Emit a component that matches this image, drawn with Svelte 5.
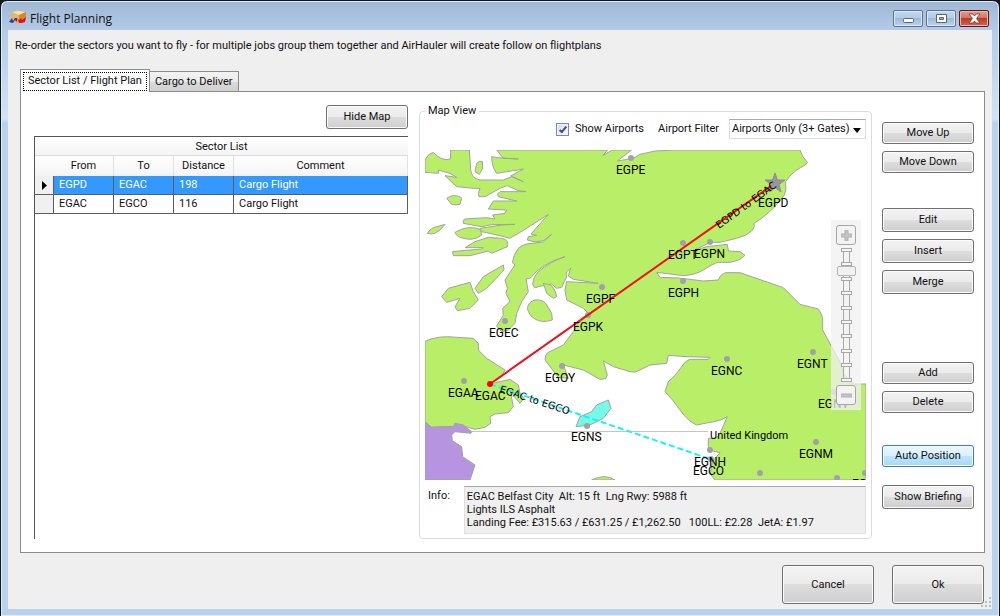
<script lang="ts">
  type Sector = { from: string; to: string; distance: number; comment: string }
  type Airport = { code: string; x: number; y: number; lx: number; ly: number }

  const sectors: Sector[] = [
    { from: 'EGPD', to: 'EGAC', distance: 198, comment: 'Cargo Flight' },
    { from: 'EGAC', to: 'EGCO', distance: 116, comment: 'Cargo Flight' }
  ]

  // x/y is the marker, lx/ly the start of the label
  const airports: Airport[] = [
    { code: 'EGPE', x: 206, y: 8, lx: 191, ly: 24 },
    { code: 'EGPT', x: 258, y: 93, lx: 243, ly: 109 },
    { code: 'EGPN', x: 285, y: 92, lx: 269, ly: 108 },
    { code: 'EGPH', x: 258, y: 131, lx: 243, ly: 147 },
    { code: 'EGPF', x: 177, y: 137, lx: 161, ly: 153 },
    { code: 'EGPK', x: 163, y: 165, lx: 148, ly: 181 },
    { code: 'EGEC', x: 80, y: 171, lx: 64, ly: 187 },
    { code: 'EGOY', x: 137, y: 216, lx: 120, ly: 232 },
    { code: 'EGAA', x: 39, y: 231, lx: 23, ly: 247 },
    { code: 'EGNS', x: 162, y: 276, lx: 146, ly: 291 },
    { code: 'EGNC', x: 302, y: 209, lx: 286, ly: 225 },
    { code: 'EGNT', x: 388, y: 202, lx: 372, ly: 218 },
    { code: 'EGNV', x: 409, y: 242, lx: 393, ly: 258 },
    { code: 'EGNM', x: 391, y: 292, lx: 374, ly: 308 },
    { code: 'EGNH', x: 285, y: 300, lx: 269, ly: 316 },
    { code: 'EGCO', x: 286, y: 309, lx: 268, ly: 325 },
    { code: '', x: 335, y: 323, lx: 0, ly: 0 },
    { code: '', x: 440, y: 323, lx: 0, ly: 0 },
    { code: 'EGCN', x: 412, y: 328, lx: 427, ly: 338 }
  ]

  // coastlines are digitised at three units per map pixel
  const land = [
    // mainland, clockwise from the north west
    'M215 0 H548 L533 17 L562 0 H620 L577 33 L625 25 L645 13 L690 3 L750 0 H1125 Q1130 20 1148 38 L1140 45 L1115 60 Q1098 70 1082 95 Q1085 120 1078 135 L1062 155 L1045 175 L1010 205 L987 220 Q990 232 983 240 Q965 258 935 265 L885 277 L855 277 L805 303 L845 290 L907 283 L910 303 L945 305 L960 316 Q945 332 915 337 L880 337 Q870 338 835 360 Q810 375 775 377 L695 367 L705 382 L760 384 L835 393 L880 390 Q888 370 903 368 L945 368 L1075 413 L1125 463 L1180 477 L1188 490 L1193 505 V540 L1220 590 L1245 635 L1255 670 L1285 702 H1323 V990 H870 L856 972 L862 935 L885 908 L850 900 V865 Q878 868 885 850 L907 800 Q890 812 865 815 L815 825 Q790 815 765 780 Q745 750 720 725 Q725 710 730 695 Q750 680 770 650 Q780 632 795 628 H850 L855 622 L785 620 L730 616 L725 640 L675 645 L645 660 Q630 670 615 665 L565 650 L535 633 L547 675 L542 686 L525 688 L475 660 L415 645 L430 685 L400 682 L360 630 Q360 615 368 608 L415 585 L445 545 L465 510 L490 490 L475 475 Q450 462 425 450 L420 420 L425 395 L520 400 L445 388 L430 378 L437 355 L425 365 L425 380 L410 412 L395 415 L380 402 L340 410 Q325 420 323 400 Q325 380 340 365 Q375 335 420 320 Q350 340 315 385 L303 387 L310 425 L290 455 L275 490 L270 520 L250 540 L230 545 L215 528 L235 495 L233 475 L255 455 L243 430 L247 415 L240 390 L270 345 L262 338 Q265 315 280 295 Q290 285 305 282 L355 276 L380 253 L355 272 L330 276 L307 270 L310 260 L335 256 L318 252 L370 193 L305 235 L255 265 L225 257 L170 245 L165 235 L230 225 L270 223 L200 224 L170 230 L115 220 Q112 208 120 207 L185 203 L210 207 L203 195 L240 190 L245 180 L190 177 L205 153 L275 153 L220 140 L218 132 L225 125 L303 125 L280 122 L247 107 L225 115 L180 140 L162 140 L160 130 L165 115 L145 115 L95 110 L60 77 L95 82 L75 70 L40 60 L40 70 L0 67 V30 Q10 10 25 7 Q50 35 77 27 V0 H133 L137 60 Q140 85 165 90 L210 90 L235 90 L260 80 L295 95 L257 78 L295 57 L265 62 L215 70 Q200 50 200 20 L220 23 L280 27 L235 25 Z',
    'M150 65 L155 40 Q165 30 172 35 L173 55 L163 73 Z',
    'M65 145 Q75 137 85 137 Q105 137 110 145 L105 163 Q90 167 80 163 Z',
    'M7 250 Q12 240 25 233 L60 223 L45 240 Q30 252 20 252 Z',
    'M90 247 Q110 235 130 233 Q155 232 167 240 L170 255 Q155 268 135 268 Q95 265 90 247 Z',
    'M190 262 L230 265 Q243 267 247 275 V290 L200 310 L190 303 L135 317 L85 317 L83 305 L100 303 L170 297 L175 293 L120 293 L150 275 Z',
    'M150 415 L175 380 L235 345 L237 360 L185 415 L160 430 Z',
    'M50 440 L70 415 L135 397 L145 425 L160 450 L135 475 L97 482 L90 470 L105 445 L65 457 Z',
    'M355 400 L378 405 Q395 425 395 440 L385 445 L365 430 Z',
    'M307 475 Q310 455 330 450 Q350 448 362 460 L380 490 L382 510 Q350 520 330 507 Q312 497 307 475 Z',
    'M500 990 Q540 970 570 990 Z',
    // Northern Ireland
    'M0 574 Q40 555 95 562 L145 565 L160 580 V600 L185 625 L240 660 L230 680 L195 702 L255 688 L280 705 L285 730 L297 745 L285 760 L270 742 L265 725 L257 730 L265 770 L250 788 L210 792 L195 800 L197 820 L180 832 L150 838 L105 825 L85 830 L45 830 L15 832 L0 815 Z'
  ]
  const ireland =
    'M0 815 L20 832 L85 830 L90 820 L115 825 L140 845 L138 850 L90 845 L80 855 L82 872 L110 890 L113 920 L150 945 L135 990 H0 Z'
  const isleOfMan = 'M453 830 L465 800 L500 785 L515 765 L550 750 L558 775 L535 805 L495 825 Z'

  const ticks = Array.from({ length: 10 }, (_, i) => Math.round(2 + i * 14.4))

  let selected = $state(0)
  let showAirports = $state(true)
  let zoom = $state(7.7)
</script>

<div class="window">
  <header class="titlebar">
    <svg class="app-icon" width="18" height="16" viewBox="0 0 18 16" aria-hidden="true">
      <path d="M3 2 L9 1 L17 2 L17 10 L9 14 L2 11 Z" fill="#e9b65c" />
      <path d="M3 2 L9 1 L17 2 L10 5 Z" fill="#fbe3a4" />
      <path d="M10 5 L17 2 V10 L10 13 Z" fill="#d08a36" />
      <path d="M0 12 L3 8 L4 11 L6 8 L8 8 L8 12 L6 10 L4 13 Z" fill="#2a35c4" />
      <path d="M8 8 L10 10 L12 8 L13 10 L17 7 L16 12 L13 13 L10 13 Z" fill="#e0141c" />
    </svg>
    <h1>Flight Planning</h1>
    <div class="caption-buttons">
      <button class="cap" aria-label="Minimize">
        <svg width="28" height="15" viewBox="0 0 28 15"><rect x="9.500" y="7.500" width="10" height="4" rx="1" fill="#fff" stroke="#5b6578" /></svg>
      </button>
      <button class="cap" aria-label="Maximize">
        <svg width="28" height="15" viewBox="0 0 28 15"><path d="M9.500 3.500 h10 v8 h-10 z M12.500 6.500 h4 v2 h-4 z" fill="#fff" fill-rule="evenodd" stroke="#5b6578" /></svg>
      </button>
      <button class="cap close" aria-label="Close">
        <svg width="28" height="15" viewBox="0 0 28 15"><path d="M9 3 h4 l1.500 2 l1.500 -2 h4 l-3.500 4.500 l3.500 4.500 h-4 l-1.500 -2 l-1.500 2 h-4 l3.500 -4.500 z" fill="#fff" stroke="#6b3a3a" stroke-width=".8" /></svg>
      </button>
    </div>
  </header>

  <main class="client">
    <p class="intro">
      Re-order the sectors you want to fly - for multiple jobs group them together and AirHauler will create follow on flightplans
    </p>

    <div class="tabs" role="tablist">
      <button class="tab active" role="tab" aria-selected="true"><span>Sector List / Flight Plan</span></button>
      <button class="tab" role="tab" aria-selected="false">Cargo to Deliver</button>
    </div>

    <section class="panel">
      <div class="sectors">
        <button class="btn tall hide-map">Hide Map</button>
        <div class="grid">
          <table>
            <caption>Sector List</caption>
            <thead>
              <tr>
                <th class="marker"></th>
                <th class="short">From</th>
                <th class="short">To</th>
                <th class="short">Distance</th>
                <th>Comment</th>
              </tr>
            </thead>
            <tbody>
              {#each sectors as sector, i}
                <tr class:selected={i === selected} onclick={() => (selected = i)}>
                  <td class="marker">
                    {#if i === selected}
                      <svg width="5" height="9" viewBox="0 0 5 9"><path d="M0 0 L5 4.500 L0 9 Z" /></svg>
                    {/if}
                  </td>
                  <td>{sector.from}</td>
                  <td>{sector.to}</td>
                  <td>{sector.distance}</td>
                  <td>{sector.comment}</td>
                </tr>
              {/each}
            </tbody>
          </table>
        </div>
      </div>

      <fieldset class="map-view">
        <legend>Map View</legend>
        <div class="filters">
          <label class="check"><input type="checkbox" bind:checked={showAirports} />Show Airports</label>
          <label for="filter">Airport Filter</label>
          <div class="select">
            <select id="filter">
              <option>Airports Only (3+ Gates)</option>
            </select>
            <svg width="8" height="5" viewBox="0 0 8 5"><path d="M0 0 H8 L4 5 Z" /></svg>
          </div>
        </div>

        <div class="map">
          <svg class="chart" viewBox="0 0 441 330" preserveAspectRatio="xMidYMid slice">
            <path d="M40 281.500 H283" stroke="#c4c4c4" />
            <g class="coast" transform="scale(.33333)">
              {#each land as d}
                <path {d} />
              {/each}
              <path d={ireland} fill="#b694df" />
              <path d={isleOfMan} fill="#74fae6" />
            </g>

            {#if showAirports}
              {#each airports as a}
                <circle cx={a.x} cy={a.y} r="3" fill="#a3a1a8" />
              {/each}
            {/if}
            <path d="M350 23 L352.500 30 L360 30 L354 34.500 L356 42 L350 37.500 L344 42 L346 34.500 L340 30 L347.500 30 Z" fill="#9b95a3" stroke="#8f8a96" />

            <path d="M65 234 L346 36" stroke="#f0101c" stroke-width="2" />
            <path d="M65 234 L288 310" stroke="#18f4f4" stroke-width="2" stroke-dasharray="6 3" />
            <circle cx="65" cy="234" r="3" fill="#f00" />
            <text class="route" transform="translate(294 79) rotate(-36)">EGPD to EGAC</text>
            <text class="route" transform="translate(74 242) rotate(18)">EGAC to EGCO</text>

            {#if showAirports}
              {#each airports as a}
                <text x={a.lx} y={a.ly}>{a.code}</text>
              {/each}
              <text x="333" y="57">EGPD</text>
              <text x="50" y="250">EGAC</text>
            {/if}
            <text x="285" y="289" class="country">United Kingdom</text>
          </svg>

          <div class="zoom">
            <button aria-label="Zoom in">
              <svg width="11" height="11" viewBox="0 0 11 11"><path d="M4 0 h3 v4 h4 v3 h-4 v4 h-3 v-4 h-4 v-3 h4 z" /></svg>
            </button>
            <div class="rail">
              <svg width="19" height="134" viewBox="0 0 19 134">
                <path d="M6.500 2 V132 M12.500 2 V132" />
                {#each ticks as y}
                  <rect x="4.500" y={y - 1.5} width="10" height="3" />
                {/each}
              </svg>
              <input type="range" min="0" max="9" step="0.1" aria-label="Zoom level" bind:value={zoom} />
            </div>
            <button aria-label="Zoom out">
              <svg width="11" height="11" viewBox="0 0 11 11"><path d="M0 4 h11 v3 h-11 z" /></svg>
            </button>
          </div>
        </div>

        <div class="info">
          <label for="info">Info:</label>
          <textarea id="info" rows="3" readonly
            value={'EGAC Belfast City  Alt: 15 ft  Lng Rwy: 5988 ft\nLights ILS Asphalt\nLanding Fee: £315.63 / £631.25 / £1,262.50   100LL: £2.28  JetA: £1.97'}
          ></textarea>
        </div>
      </fieldset>

      <div class="actions">
        <div class="group">
          <button class="btn">Move Up</button>
          <button class="btn">Move Down</button>
        </div>
        <div class="group">
          <button class="btn tall">Edit</button>
          <button class="btn tall">Insert</button>
          <button class="btn tall">Merge</button>
        </div>
        <div class="group add">
          <button class="btn">Add</button>
          <button class="btn">Delete</button>
        </div>
        <div class="group auto">
          <button class="btn hot">Auto Position</button>
          <button class="btn tall">Show Briefing</button>
        </div>
      </div>
    </section>

    <footer>
      <button class="btn big">Cancel</button>
      <button class="btn big">Ok</button>
      <svg class="grip" width="10" height="10" viewBox="0 0 10 10" aria-hidden="true">
        <path d="M8 0h2v2h-2z M4 4h2v2h-2z M8 4h2v2h-2z M0 8h2v2h-2z M4 8h2v2h-2z M8 8h2v2h-2z" fill="#bcbcbc" />
      </svg>
    </footer>
  </main>
</div>

<style>
  :global(body) {
    margin: 0;
    background: #14181e;
  }

  .window {
    box-sizing: border-box;
    min-height: 100vh;
    display: flex;
    flex-direction: column;
    padding: 0 7px 7px;
    border: 1px solid #10151c;
    border-radius: 7px 7px 0 0;
    background: linear-gradient(#a0b7d4, #b4cce9 30px, #d2e3f5 118px, #b9d1ea 122px);
    box-shadow: inset 0 0 0 1px #d8f0fa;
    font: 11px/14px Roboto, "Liberation Sans", sans-serif;
    color: #111;
  }

  button,
  select,
  textarea {
    font: inherit;
    color: inherit;
  }

  .titlebar {
    display: flex;
    align-items: center;
    height: 29px;
    padding: 0 3px 0 1px;
  }

  .app-icon {
    margin: 5px 3px 0 0;
  }

  h1 {
    flex: 1;
    margin: 7px 0 0;
    font: 12px/16px "Open Sans", sans-serif;
  }

  .caption-buttons {
    display: flex;
    gap: 3px;
    margin-top: 5px;
  }

  .cap {
    display: block;
    width: 30px;
    height: 17px;
    padding: 0;
    border: 1px solid #5c7390;
    border-radius: 2px;
    background: linear-gradient(#c3d6ec, #b4cbe6 50%, #9db8d6 50%, #bcd4ee);
    box-shadow: inset 0 0 0 1px #dbe8f6;
  }

  .cap svg {
    display: block;
  }

  .cap.close {
    border-color: #5a1a1c;
    background: linear-gradient(#e59f92, #d4705e 50%, #bd3a24 50%, #d6674c);
    box-shadow: inset 0 0 0 1px #eeb5a9;
  }

  .client {
    flex: 1;
    display: flex;
    flex-direction: column;
    padding: 9px 7px 5px 12px;
    background: #efefef;
  }

  .intro {
    margin: 0 0 16px -5px;
  }

  .tabs {
    display: flex;
    align-items: flex-end;
  }

  .tab {
    height: 20px;
    padding: 0 5px;
    border: 1px solid #8a8c90;
    border-bottom: 0;
    background: linear-gradient(#f3f3f3, #ebebeb 50%, #dcdcdc 50%, #cfcfcf);
  }

  .tab.active {
    height: 23px;
    margin-bottom: -1px;
    padding: 2px;
    background: #fff;
    z-index: 1;
  }

  .tab.active span {
    display: block;
    padding: 1px 4px 2px;
    border: 1px dotted #000;
  }

  .tab + .tab {
    border-left: 0;
  }

  .panel {
    flex: 1;
    display: grid;
    grid-template-columns: 375fr 453fr 92px;
    gap: 10px;
    padding: 12px 10px 13px 13px;
    border: 1px solid #8a8c90;
    background: #fff;
  }

  .btn {
    height: 22px;
    padding: 0 6px;
    border: 1px solid #707070;
    border-radius: 3px;
    background: linear-gradient(#f3f3f3, #ebebeb 50%, #dddddd 50%, #cfcfcf);
    box-shadow: inset 0 0 0 1px #fbfbfb;
  }

  .btn.tall {
    height: 24px;
  }

  .btn.big {
    width: 92px;
    height: 39px;
  }

  .btn.hot {
    border-color: #3c7fb1;
    background: linear-gradient(#eaf6fd, #d9f0fc 50%, #bee6fd 50%, #a7d9f5);
  }

  .sectors {
    display: flex;
    flex-direction: column;
    gap: 7px;
    padding: 1px 1px 0 0;
  }

  .hide-map {
    align-self: flex-end;
    width: 82px;
  }

  .grid {
    flex: 1;
    border: solid #555;
    border-width: 1px 0 0 1px;
  }

  table {
    width: 100%;
    table-layout: fixed;
    border-collapse: separate;
    border-spacing: 0;
  }

  caption {
    height: 18px;
    line-height: 19px;
    border-bottom: 1px solid #ddd;
    background: linear-gradient(#fff, #f4f4f4);
  }

  th {
    height: 20px;
    padding: 0;
    border-right: 1px solid #e2e2e2;
    font-weight: 400;
    background: linear-gradient(#fff, #f4f4f4);
  }

  th.marker {
    width: 18px;
    border-color: transparent;
  }

  th.short {
    width: 59px;
  }

  td {
    height: 18px;
    padding: 0 5px;
    border: solid #5d5d5d;
    border-width: 0 1px 1px 0;
    line-height: 16px;
  }

  td.marker {
    padding: 0 0 0 7px;
    background: #f0f0f0;
  }

  td.marker svg {
    display: block;
  }

  .selected td:not(.marker) {
    color: #fff;
    background: #3399ff;
  }

  .map-view {
    display: flex;
    flex-direction: column;
    min-width: 0;
    margin: 0;
    padding: 0 5px 4px;
    border: 1px solid #d9dde1;
    border-radius: 4px;
  }

  legend {
    padding: 0 3px;
  }

  .filters {
    display: flex;
    align-items: center;
    justify-content: flex-end;
    gap: 10px;
    height: 22px;
    margin-bottom: 10px;
  }

  .check {
    display: flex;
    align-items: center;
    gap: 6px;
    margin-right: 4px;
  }

  .check input {
    appearance: none;
    position: relative;
    width: 13px;
    height: 13px;
    margin: 0;
    border: 1px solid #7b8ba8;
    background: linear-gradient(135deg, #cfd8e4, #fff);
    box-shadow: inset 0 0 0 1px #f4f4f4;
  }

  .check input:checked::before {
    content: "";
    position: absolute;
    left: 4px;
    top: 1px;
    width: 2px;
    height: 6px;
    border: solid #3a4f94;
    border-width: 0 2px 2px 0;
    transform: rotate(40deg);
  }

  .select {
    position: relative;
    width: 137px;
  }

  select {
    appearance: none;
    width: 100%;
    height: 20px;
    padding: 0 14px 0 2px;
    border: 1px solid #dcdcdc;
    border-top-color: #aaa;
    border-radius: 0;
    background: #fff;
  }

  .select svg {
    position: absolute;
    right: 5px;
    top: 9px;
    pointer-events: none;
  }

  .map {
    position: relative;
    flex: 1;
    min-height: 330px;
    overflow: hidden;
  }

  .chart {
    position: absolute;
    width: 100%;
    height: 100%;
    font: 12px Roboto, sans-serif;
  }

  .coast path {
    stroke: #a2a2a2;
    stroke-width: 3;
    stroke-linejoin: round;
  }

  .coast path:not([fill]) {
    fill: #b9ef68;
  }

  .route {
    font: 10px "DejaVu Sans", sans-serif;
  }

  .country {
    font-size: 11px;
  }

  .zoom {
    position: absolute;
    top: 70px;
    right: 5px;
    display: flex;
    flex-direction: column;
    align-items: center;
    gap: 3px;
    padding: 5px;
    background: rgba(240, 240, 240, 0.75);
  }

  .zoom button {
    display: grid;
    place-items: center;
    width: 20px;
    height: 20px;
    padding: 0;
    border: 1px solid #a5a5a5;
    border-radius: 3px;
    background: #f3f3f3;
  }

  .zoom button path {
    fill: #c4c4c4;
    stroke: #b0b0b0;
  }

  .rail {
    position: relative;
    height: 134px;
  }

  .rail svg {
    display: block;
    fill: #f6f6f6;
    stroke: #a8a8a8;
  }

  .rail input {
    appearance: none;
    writing-mode: vertical-lr;
    direction: rtl;
    position: absolute;
    inset: 0;
    width: 19px;
    height: 134px;
    margin: 0;
    background: none;
  }

  .rail input::-webkit-slider-thumb {
    appearance: none;
    box-sizing: border-box;
    width: 19px;
    height: 10px;
    border: 1px solid #b4b4b4;
    border-radius: 2px;
    background: #f1f1f1;
  }

  .info {
    display: flex;
    gap: 14px;
    margin-top: 6px;
    padding-left: 3px;
  }

  .info label {
    padding-top: 3px;
  }

  textarea {
    flex: 1;
    box-sizing: border-box;
    height: 48px;
    padding: 3px 2px;
    border: 1px solid #e0e0e0;
    border-top-color: #a8a8a8;
    outline: 0;
    background: #efefef;
    line-height: 13px;
    white-space: pre;
    overflow: hidden;
    resize: none;
  }

  .actions {
    display: flex;
    flex-direction: column;
    gap: 35px;
    padding-top: 18px;
  }

  .group {
    display: flex;
    flex-direction: column;
    gap: 7px;
  }

  .add {
    margin-top: 33px;
  }

  .auto {
    gap: 18px;
    margin-top: -3px;
  }

  footer {
    position: relative;
    display: flex;
    justify-content: flex-end;
    gap: 18px;
    margin-top: 12px;
    padding-right: 1px;
  }

  .grip {
    position: absolute;
    right: -6px;
    bottom: -3px;
  }
</style>
